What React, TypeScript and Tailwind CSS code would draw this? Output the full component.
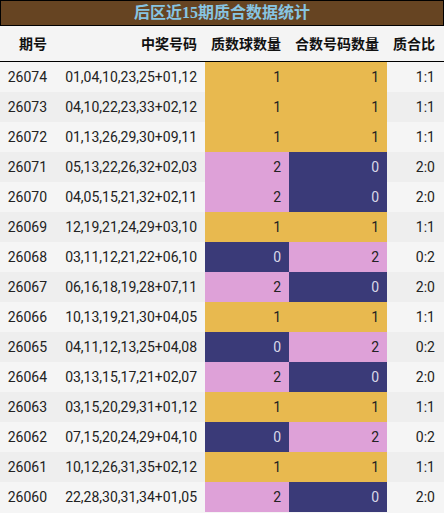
import React from "react";

type Row = [string, string, number, number];

const rows: Row[] = [
  ["26074", "01,04,10,23,25+01,12", 1, 1],
  ["26073", "04,10,22,23,33+02,12", 1, 1],
  ["26072", "01,13,26,29,30+09,11", 1, 1],
  ["26071", "05,13,22,26,32+02,03", 2, 0],
  ["26070", "04,05,15,21,32+02,11", 2, 0],
  ["26069", "12,19,21,24,29+03,10", 1, 1],
  ["26068", "03,11,12,21,22+06,10", 0, 2],
  ["26067", "06,16,18,19,28+07,11", 2, 0],
  ["26066", "10,13,19,21,30+04,05", 1, 1],
  ["26065", "04,11,12,13,25+04,08", 0, 2],
  ["26064", "03,13,15,17,21+02,07", 2, 0],
  ["26063", "03,15,20,29,31+01,12", 1, 1],
  ["26062", "07,15,20,24,29+04,10", 0, 2],
  ["26061", "10,12,26,31,35+02,12", 1, 1],
  ["26060", "22,28,30,31,34+01,05", 2, 0],
];

function cellClass(v: number) {
  if (v === 1) return "bg-[#e8b94f] text-[#222]";
  if (v === 2) return "bg-[#dea1d8] text-[#222]";
  return "bg-[#3a3a78] text-[#d8d8e8]";
}

export default function App() {
  return (
    <div className="w-[444px] h-[513px] overflow-hidden bg-[#f5f5f5] font-['Roboto','Noto_Sans_CJK_SC',sans-serif] text-[14px] text-[#222]">
      <div className="h-[26px] border border-black bg-[#664422] flex items-center justify-center text-[16px] font-bold text-[#87c5e2] font-['Liberation_Serif','Noto_Sans_CJK_SC',serif] leading-none">
        后区近15期质合数据统计
      </div>
      <div className="grid grid-cols-[55px_150px_84px_98px_57px] h-[36px] bg-[#f4f4f4] border-b border-black font-bold text-[14px] text-[#111] font-['Noto_Sans_CJK_SC',sans-serif]">
        <div className="flex items-center justify-end pr-[8px]">期号</div>
        <div className="flex items-center justify-end pr-[8px]">中奖号码</div>
        <div className="flex items-center justify-end pr-[8px]">质数球数量</div>
        <div className="flex items-center justify-end pr-[8px]">合数号码数量</div>
        <div className="flex items-center justify-end pr-[9px]">质合比</div>
      </div>
      {rows.map((r, i) => (
        <div
          key={r[0]}
          className={`grid grid-cols-[55px_150px_84px_98px_57px] h-[30px] ${i % 2 === 0 ? "bg-[#f5f5f5]" : "bg-[#eeeeee]"}`}
        >
          <div className="flex items-center justify-end pr-[8px]">{r[0]}</div>
          <div className="flex items-center justify-end pr-[8px]">{r[1]}</div>
          <div className={`flex items-center justify-end pr-[8px] ${cellClass(r[2])}`}>{r[2]}</div>
          <div className={`flex items-center justify-end pr-[8px] ${cellClass(r[3])}`}>{r[3]}</div>
          <div className="flex items-center justify-end pr-[9px]">{`${r[2]}:${r[3]}`}</div>
        </div>
      ))}
    </div>
  );
}
